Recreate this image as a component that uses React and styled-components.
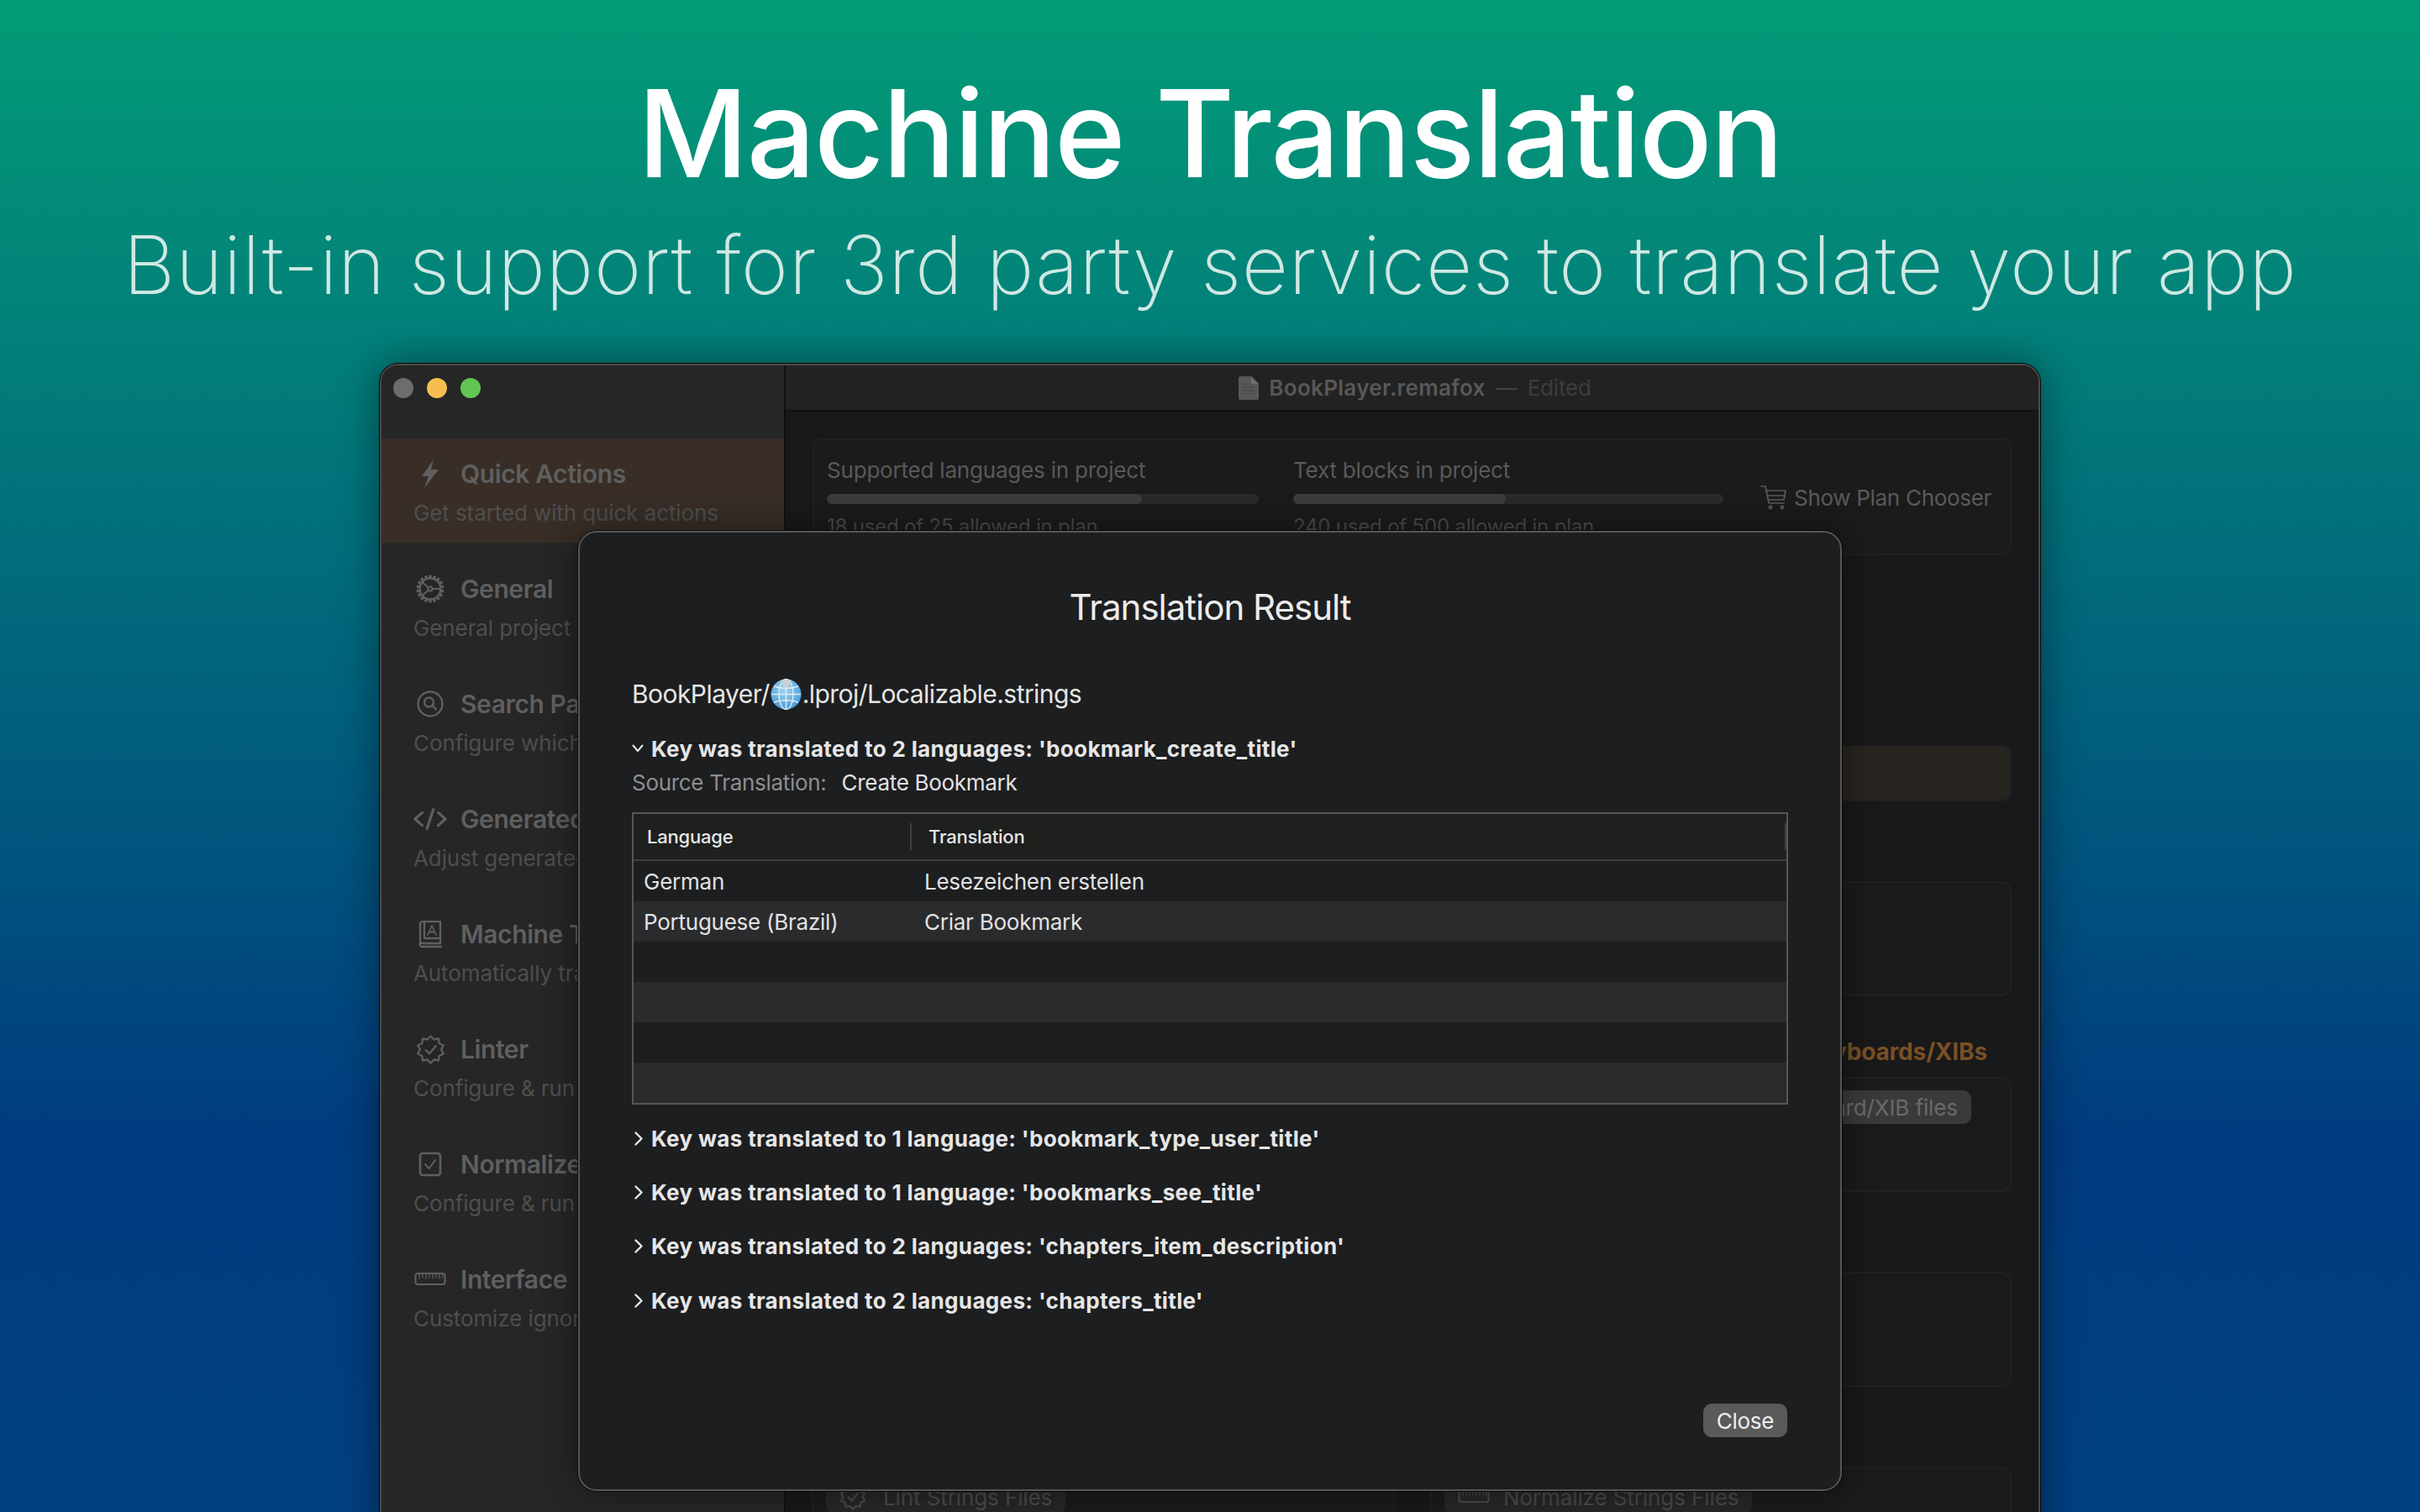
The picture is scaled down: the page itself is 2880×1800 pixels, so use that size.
import React from "react";
import styled, { createGlobalStyle } from "styled-components";

const Global = createGlobalStyle`
  html, body { margin: 0; padding: 0; background: #004080; }
  * { box-sizing: border-box; }
`;
const UI = `"Inter", "Liberation Sans", sans-serif`;

const Page = styled.div`
  width: 2880px; height: 1800px; overflow: hidden; position: relative;
  display: flex; flex-direction: column; align-items: center;
  background: linear-gradient(180deg, #039c77 0%, #003c80 75%, #004080 100%);
  font-family: ${UI};
`;
const Hero = styled.header`
  height: 433px; width: 100%; flex: none; display: flex; flex-direction: column; align-items: center;
  font-variant-ligatures: none;
`;
const HeroTitle = styled.h1`
  margin: 73px 0 0; font-family: "Inter", sans-serif; font-size: 144px; line-height: 172px; font-weight: 500;
  color: #fff; letter-spacing: -1.6px; white-space: nowrap;
`;
const HeroSub = styled.h2`
  margin: 7px 0 0; font-family: "Inter", sans-serif; font-size: 96px; line-height: 126px; font-weight: 250;
  color: #cfe8e4; white-space: nowrap; letter-spacing: 0.55px;
`;
const Window = styled.div`
  width: 1976px; height: 1420px; flex: none; display: flex; overflow: hidden;
  border: 2px solid #4a4a4a; border-radius: 22px 22px 0 0; background: #18191a;
  box-shadow: 0 0 0 1px #0b0b0b, 0 0 50px rgba(0,0,0,.45);
`;
const Sidebar = styled.aside`
  width: 479px; flex: none; background: #262626; display: flex; flex-direction: column;
`;
const Traffic = styled.div`
  height: 87px; padding: 15px 0 0 14px; display: flex; gap: 16px; align-items: flex-start;
`;
const Dot = styled.span`
  width: 24px; height: 24px; border-radius: 50%; background: ${p => p.$c};
`;
const Rows = styled.nav`
  display: flex; flex-direction: column; gap: 13px;
`;
const Row = styled.div`
  height: 124px; padding: 22px 0 0 38px; overflow: hidden;
  background: ${p => (p.$active ? "#382e27" : "transparent")};
`;
const RowTitle = styled.div`
  display: flex; align-items: center; height: 40px;
  font-size: 30px; font-weight: 600; color: #5f5f5f; letter-spacing: -0.4px; white-space: nowrap;
`;
const IconSlot = styled.span`
  width: 40px; margin-right: 16px; flex: none; display: flex; align-items: center; justify-content: center;
  color: #5f5f5f;
`;
const RowSub = styled.div`
  margin-top: 9px; height: 36px; line-height: 36px; font-size: 26px; color: #4e4e4e; white-space: nowrap;
  letter-spacing: -0.1px;
`;
const Main = styled.main`
  flex: 1; min-width: 0; display: flex; flex-direction: column; border-left: 2px solid #101010;
`;
const TitleBar = styled.div`
  height: 55px; flex: none; background: #222222; border-bottom: 2px solid #111;
  display: flex; align-items: center; justify-content: center; gap: 12px;
  font-size: 26px; white-space: nowrap; padding-left: 7px;
`;
const DocName = styled.span`font-weight: 600; color: #585858; letter-spacing: 0.3px;`;
const DocDash = styled.span`color: #444; `;
const DocEdited = styled.span`color: #3d3d3d; letter-spacing: -0.2px;`;
const Body = styled.div`
  padding: 32px 32px 0; display: flex; flex-direction: column;
`;
const Card = styled.section`
  flex: none; height: ${p => p.$h || 137}px; margin-top: ${p => p.$mt || 0}px;
  border: 2px solid #212121; border-radius: 12px; background: ${p => p.$bg || "#1b1b1b"};
`;
const PlanCard = styled(Card)`
  display: grid; grid-template-columns: 514px 512px 1fr; column-gap: 41px; padding: 18px 0 0 15px;
`;
const Meter = styled.div`display: flex; flex-direction: column;`;
const MeterLabel = styled.div`
  height: 36px; line-height: 36px; font-size: 26px; color: #595959; white-space: nowrap; letter-spacing: -0.2px;
`;
const Track = styled.div`
  margin-top: 10px; height: 12px; border-radius: 6px; background: #292a2b; overflow: hidden;
`;
const Fill = styled.div`height: 100%; background: #3c3c3c; border-radius: 6px;`;
const MeterNote = styled(MeterLabel)`margin-top: 9px; font-size: 24px; color: #4a4a4a;`;
const PlanBtn = styled.div`
  display: flex; align-items: center; gap: 8px; height: 36px; margin: 32px 0 0 3px;
  font-size: 26px; color: #5a5a5a; white-space: nowrap; letter-spacing: -0.3px;
`;
const Heading = styled.div`
  margin-top: 48px; height: 36px; line-height: 36px; padding-right: 29px; text-align: right;
  font-size: 28px; font-weight: 700; color: #7a4f24; letter-spacing: -0.15px;
`;
const EndCard = styled(Card)`
  display: flex; align-items: flex-start; justify-content: flex-end; padding: 14px 46px 0 0;
`;
const Pill = styled.div`
  display: flex; align-items: center; gap: ${p => p.$gap || 16}px; height: 40px; padding: 0 16px; border-radius: 10px;
  background: ${p => p.$bg || "#3a3a3a"}; color: ${p => p.$c || "#6a6a6a"};
  font-size: 26px; white-space: nowrap; letter-spacing: -0.1px;
`;
const TwoCol = styled.div`
  margin-top: 95px; display: grid; grid-template-columns: 694px 692px; column-gap: 42px; margin-left: -1px;
`;
const BottomCard = styled(Card)`padding: 14px 0 0 15px; display: flex; align-items: flex-start; height: 200px;`;

/* sheet */
const Modal = styled.div`
  position: absolute; left: 688px; top: 632px; width: 1504px; height: 1143px;
  display: flex; flex-direction: column; padding: 59px 62px 62px;
  border: 2px solid #565656; border-radius: 22px; background: #1d1e20; color: #e2e2e2;
  box-shadow: 0 0 0 1px #0a0a0a, 0 0 40px rgba(0,0,0,.45);
`;
const ModalTitle = styled.h3`
  margin: 0; height: 60px; line-height: 60px; text-align: center; font-size: 42px; font-weight: 400;
  color: #ececec; letter-spacing: -1px;
`;
const PathLine = styled.div`
  margin-top: 53px; height: 40px; display: flex; align-items: center; font-size: 30px; color: #e6e6e6; letter-spacing: -0.55px;
`;
const KeyRow = styled.div`
  margin-top: ${p => p.$mt}px; height: 36px; display: flex; align-items: center; gap: ${p => p.$gap}px;
  font-size: 26px; font-weight: 700; color: #e6e6e6; white-space: nowrap; letter-spacing: 0.35px;
`;
const ChevronDownIcon = styled.svg`width: 14px; height: 10px; flex: none;`;
const ChevronRightIcon = styled.svg`width: 12px; height: 17px; flex: none; margin-left: 2px;`;
const SourceLine = styled.div`
  margin-top: 5px; height: 36px; line-height: 36px; font-size: 26px; color: #8e8e8e; display: flex; gap: 18px; letter-spacing: -0.3px;
`;
const SourceValue = styled.span`color: #e2e2e2;`;
const Table = styled.div`
  margin-top: 17px; height: 348px; border: 2px solid #565656; background: #1d1e20;
`;
const THead = styled.div`
  height: 56px; display: flex; align-items: center; background: #1e201e; border-bottom: 2px solid #3e3e3e;
`;
const THCell = styled.div`
  font-size: 22px; font-weight: 500; color: #e6e6e6; padding-left: ${p => p.$pl}px; width: ${p => p.$w}px; flex: ${p => (p.$w ? "none" : 1)};
  letter-spacing: -0.2px;
`;
const ColSep = styled.span`width: 2px; height: 32px; background: #3e3e3e; flex: none;`;
const TRow = styled.div`
  height: 48px; display: grid; grid-template-columns: 334px 1fr; align-items: center;
  background: ${p => (p.$odd ? "#2a2b2d" : "transparent")};
  font-size: 26px; color: #e2e2e2; letter-spacing: -0.25px;
`;
const TCell = styled.div`padding-left: 12px; white-space: nowrap;`;
const Footer = styled.div`margin-top: auto; display: flex; justify-content: flex-end; padding-right: 1px;`;
const CloseBtn = styled.button`
  width: 100px; height: 40px; border: 0; border-radius: 10px; background: #5a5a5a; color: #eee;
  font: 400 26px ${UI}; letter-spacing: -0.3px; padding: 0;
`;

const S = { fill: "none", stroke: "currentColor", strokeLinecap: "round", strokeLinejoin: "round" };
const Bolt = () => (
  <svg width="24" height="34" viewBox="0 0 24 34"><path d="M16 0 L2 20 L10 20 L5 34 L22 12 L13 12 Z" fill="currentColor" /></svg>
);
const Gear = () => {
  const teeth = Array.from({ length: 18 }, (_, i) => i * 20);
  return (
    <svg width="36" height="36" viewBox="0 0 36 36" {...S} strokeWidth="2.4">
      <circle cx="18" cy="18" r="12.5" />
      {teeth.map(a => <line key={a} x1="18" y1="1.5" x2="18" y2="5.5" strokeWidth="3.4" transform={`rotate(${a} 18 18)`} strokeLinecap="butt" />)}
      <circle cx="18" cy="18" r="2.6" strokeWidth="2" />
      <path d="M15.8 16.4 L9 10.5 M15.8 19.6 L9 25.5 M20.6 18 L30 18" strokeWidth="2" />
    </svg>
  );
};
const Search = () => (
  <svg width="32" height="32" viewBox="0 0 32 32" {...S} strokeWidth="2.4">
    <rect x="1.5" y="1.5" width="29" height="29" rx="14.5" />
    <circle cx="14.5" cy="14" r="5.5" /><path d="M18.5 18 L23 22.5" />
  </svg>
);
const Code = () => (
  <svg width="42" height="28" viewBox="0 0 42 28" {...S} strokeWidth="3.4">
    <path d="M11 6 L2 14 L11 22 M31 6 L40 14 L31 22 M25 2 L17 26" />
  </svg>
);
const BookA = () => (
  <svg width="28" height="33" viewBox="0 0 28 33" {...S} strokeWidth="2.4">
    <path d="M26 27 H5 a3 3 0 0 1 -3 -3 V4 a3 3 0 0 1 3 -3 H26 V27 Z" />
    <path d="M7 1.5 V21 H26 M2.5 26 a3 3 0 0 0 3 5 H27" />
    <path d="M11 17 L16 6 L21 17 M13 13.5 H19" strokeWidth="1.8" />
  </svg>
);
const sealPath = (() => {
  const n = 10, pts = [];
  for (let i = 0; i < n * 2; i++) {
    const r = i % 2 ? 13 : 16.5;
    const a = (Math.PI * i) / n - Math.PI / 2;
    pts.push(`${(18 + r * Math.cos(a)).toFixed(2)} ${(18 + r * Math.sin(a)).toFixed(2)}`);
  }
  return `M${pts.join(" L")} Z`;
})();
const Seal = ({ size = 35 }) => (
  <svg width={size} height={size} viewBox="0 0 36 36" {...S} strokeWidth="2.4">
    <path d={sealPath} />
    <path d="M12 18.5 L16.5 23 L24.5 13.5" />
  </svg>
);
const CheckBox = () => (
  <svg width="28" height="30" viewBox="0 0 28 30" {...S} strokeWidth="2.6">
    <rect x="2" y="2" width="24" height="26" rx="3" /><path d="M8 15 L12.5 20 L20 10" strokeWidth="2" />
  </svg>
);
const Ruler = ({ w = 38, h = 18 }) => (
  <svg width={w} height={h} viewBox="0 0 38 18" {...S} strokeWidth="2.2">
    <rect x="1.5" y="2" width="35" height="13" rx="2.5" />
    <path d="M6 3 V8 M10 3 V7 M14 3 V8 M18 3 V7 M22 3 V8 M26 3 V7 M30 3 V8 M33.5 3 V7" strokeWidth="1.3" />
  </svg>
);
const Doc = () => (
  <svg width="24" height="28" viewBox="0 0 24 28">
    <path d="M2 0 H15 L24 9 V26 a2 2 0 0 1 -2 2 H2 a2 2 0 0 1 -2 -2 V2 a2 2 0 0 1 2 -2 Z" fill="#585858" />
    <path d="M15 0 L24 9 H15 Z" fill="#6d6d6d" />
    <path d="M5 9 H12 M5 13 H19 M5 17 H19 M5 21 H19" stroke="#4a4a4a" strokeWidth="1.6" />
  </svg>
);
const Cart = () => (
  <svg width="32" height="32" viewBox="0 0 32 32" {...S} strokeWidth="1.7" color="#5a5a5a">
    <path d="M1 3 H6 L10 23 H28 M7 8 H30 L28 19 H9" />
    <path d="M9 14 H29" /><circle cx="12" cy="28" r="1.6" /><circle cx="26" cy="28" r="1.6" />
  </svg>
);
const Globe = () => (
  <svg width="37" height="37" viewBox="0 0 37 37" style={{ margin: "0 1px 0 1px", flex: "none" }}>
    <defs>
      <radialGradient id="gl" cx="45%" cy="35%" r="70%">
        <stop offset="0" stopColor="#9fd4f3" /><stop offset="1" stopColor="#3f97d8" />
      </radialGradient>
    </defs>
    <circle cx="18.5" cy="18.5" r="18" fill="url(#gl)" />
    <g fill="none" stroke="#dfe9ef" strokeWidth="1.5">
      <ellipse cx="18.5" cy="18.5" rx="8.5" ry="18" />
      <path d="M18.5 .5 V36.5 M1 18.5 H36 M4 9 Q18.5 14 33 9 M4 28 Q18.5 23 33 28" />
    </g>
    <path d="M12 2 Q18.5 0 25 2 L22 9 Q18.5 10 15 9 Z" fill="#c9ced3" />
  </svg>
);
const ChevDown = () => (
  <ChevronDownIcon viewBox="0 0 14 10" fill="none" stroke="#e6e6e6" strokeWidth="2" strokeLinecap="round" strokeLinejoin="round">
    <path d="M1.5 1.5 L7 8 L12.5 1.5" />
  </ChevronDownIcon>
);
const ChevRight = () => (
  <ChevronRightIcon viewBox="0 0 12 17" fill="none" stroke="#e6e6e6" strokeWidth="2.4" strokeLinecap="round" strokeLinejoin="round">
    <path d="M2.5 1.5 L9.5 8.5 L2.5 15.5" />
  </ChevronRightIcon>
);

const items = [
  [Bolt, "Quick Actions", "Get started with quick actions", true],
  [Gear, "General", "General project settings"],
  [Search, "Search Paths", "Configure which folders to search"],
  [Code, "Generated Code", "Adjust generated code"],
  [BookA, "Machine Translation", "Automatically translate texts"],
  [Seal, "Linter", "Configure & run linter"],
  [CheckBox, "Normalizer", "Configure & run normalizer"],
  [Ruler, "Interface", "Customize ignored interface"],
];
const keys = [
  "Key was translated to 1 language: 'bookmark_type_user_title'",
  "Key was translated to 1 language: 'bookmarks_see_title'",
  "Key was translated to 2 languages: 'chapters_item_description'",
  "Key was translated to 2 languages: 'chapters_title'",
];
const rows = [["German", "Lesezeichen erstellen"], ["Portuguese (Brazil)", "Criar Bookmark"], [], [], [], []];

export default function App() {
  return (
    <Page>
      <Global />
      <Hero>
        <HeroTitle>Machine Translation</HeroTitle>
        <HeroSub>Built-in support for 3rd party services to translate your app</HeroSub>
      </Hero>
      <Window>
        <Sidebar>
          <Traffic>
            <Dot $c="#6d6d6d" /><Dot $c="#f5bf4f" /><Dot $c="#62c554" />
          </Traffic>
          <Rows>
            {items.map(([Icon, t, s, a]) => (
              <Row key={t} $active={a}>
                <RowTitle><IconSlot><Icon /></IconSlot>{t}</RowTitle>
                <RowSub>{s}</RowSub>
              </Row>
            ))}
          </Rows>
        </Sidebar>
        <Main>
          <TitleBar>
            <Doc /><DocName>BookPlayer.remafox</DocName><DocDash>—</DocDash><DocEdited>Edited</DocEdited>
          </TitleBar>
          <Body>
            <PlanCard $h={139}>
              <Meter>
                <MeterLabel>Supported languages in project</MeterLabel>
                <Track><Fill style={{ width: "73%" }} /></Track>
                <MeterNote>18 used of 25 allowed in plan</MeterNote>
              </Meter>
              <Meter>
                <MeterLabel>Text blocks in project</MeterLabel>
                <Track><Fill style={{ width: "49.5%" }} /></Track>
                <MeterNote>240 used of 500 allowed in plan</MeterNote>
              </Meter>
              <PlanBtn><Cart />Show Plan Chooser</PlanBtn>
            </PlanCard>
            <Card $mt={226} $h={67} $bg="#282520" />
            <Card $mt={95} />
            <Heading>Storyboards/XIBs</Heading>
            <EndCard $mt={12}>
              <Pill>Storyboard/XIB files</Pill>
            </EndCard>
            <Card $mt={95} />
            <TwoCol>
              <BottomCard>
                <Pill $bg="#272727" $c="#4a4a4a" $gap={20}><Seal size={32} />Lint Strings Files</Pill>
              </BottomCard>
              <BottomCard>
                <Pill $bg="#272727" $c="#4a4a4a"><Ruler />Normalize Strings Files</Pill>
              </BottomCard>
            </TwoCol>
          </Body>
        </Main>
      </Window>
      <Modal>
        <ModalTitle>Translation Result</ModalTitle>
        <PathLine>BookPlayer/<Globe />.lproj/Localizable.strings</PathLine>
        <KeyRow $mt={27} $gap={9}><ChevDown />Key was translated to 2 languages: 'bookmark_create_title'</KeyRow>
        <SourceLine>Source Translation:<SourceValue>Create Bookmark</SourceValue></SourceLine>
        <Table>
          <THead>
            <THCell $w={329} $pl={16}>Language</THCell>
            <ColSep />
            <THCell $pl={20}>Translation</THCell>
            <ColSep />
          </THead>
          {rows.map((r, i) => (
            <TRow key={i} $odd={i % 2 === 1}>
              <TCell>{r[0]}</TCell>
              <TCell>{r[1]}</TCell>
            </TRow>
          ))}
        </Table>
        {keys.map((k, i) => (
          <KeyRow key={k} $gap={9} $mt={i === 0 ? 22 : 28.4}><ChevRight />{k}</KeyRow>
        ))}
        <Footer><CloseBtn>Close</CloseBtn></Footer>
      </Modal>
    </Page>
  );
}
